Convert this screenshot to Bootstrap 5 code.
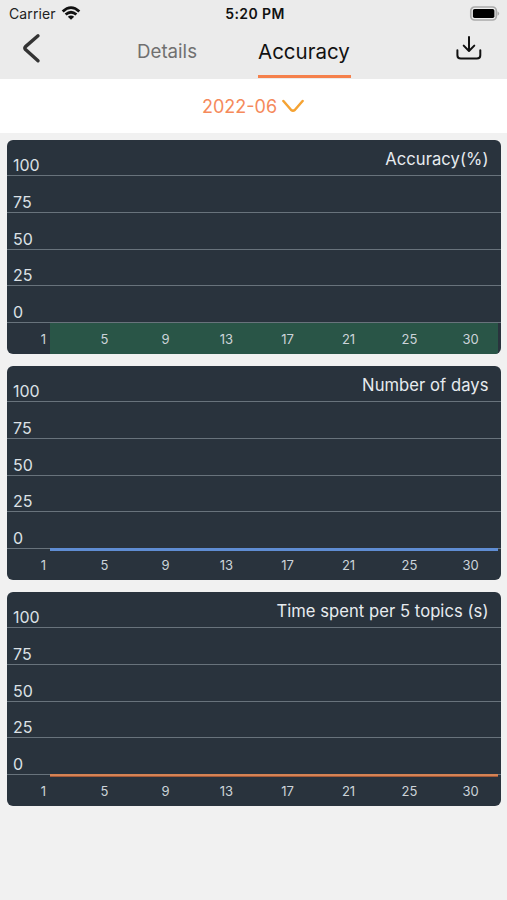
<!DOCTYPE html>
<html lang="en">
<head>
<meta charset="utf-8">
<meta name="viewport" content="width=device-width, initial-scale=1">
<title>Accuracy</title>
<link href="https://cdn.jsdelivr.net/npm/bootstrap@5.3.0/dist/css/bootstrap.min.css" rel="stylesheet">
<style>
body{background:#f1f1f1;font-family:Inter,"Liberation Sans",sans-serif;color:#111;min-height:900px}
svg{display:block}
.top-area{background:#ebebeb;height:79px}
.status-bar{height:27px;padding:0 6px 0 9px;font-size:14px;line-height:27px}
.status-bar>*{flex:1 1 0}
.carrier{letter-spacing:.1px;color:#222}
.clock{font-weight:600;letter-spacing:.4px}
.title-bar{height:52px;padding:0 25px 0 21px}
.tab-link{line-height:30px;padding-top:9px;height:51px;border-bottom:3px solid transparent;white-space:nowrap}
.tab-details{font-size:18.7px;line-height:32px;color:#707070;margin-left:96px;width:61px}
.tab-accuracy{font-size:20.5px;line-height:31px;color:#111;margin-left:60px;width:93px;border-color:#f5804b}
.month-bar{height:54px;font-size:18px;color:#f58a5b;gap:5px;padding-right:1px}
.charts{padding:7px 6px 0 7px;gap:12.4px}
.chart-card{background:#29333d;border-radius:6px;height:213.6px;color:#dce1e6;overflow:hidden}
.level{height:36.7px;border-bottom:1px solid #68737c;padding:0 12.5px 0 6px;font-size:16px;line-height:20px}
.level:first-child{height:36.2px}
.chart-title{height:35px;line-height:39px;font-size:16.6px;letter-spacing:.05px;color:#e7ebef;white-space:nowrap}
.days{padding-left:6px;font-size:13px;line-height:32px;height:31px;color:#ccd3d9;position:relative}
.days>span{width:61px;text-align:center;z-index:1}
.series{position:absolute;left:43px;right:3px;top:-1px;height:3px}
.series-accuracy{top:0;height:31px;background:#295547}
.series-days{background:#5f8dd3}
.series-time{background:#d58354;border-bottom:1px solid #a1593a}
</style>
</head>
<body>
<header class="top-area">
  <div class="status-bar d-flex align-items-center">
    <div class="d-flex align-items-center">
      <span class="carrier">Carrier</span>
      <svg class="ms-1" width="22" height="16" viewBox="0 0 22 16" fill="none" stroke="#111" stroke-width="2.8"><path d="M2.7 5.5Q11 -2.3 19.3 5.5M5.6 8.5Q11 3.9 16.4 8.5"/><path d="M7.8 10.7Q11 8.2 14.2 10.7L11 13.7Z" fill="#111" stroke="none"/></svg>
    </div>
    <div class="clock text-center">5:20 PM</div>
    <div class="d-flex justify-content-end">
      <svg width="32" height="16" viewBox="0 0 32 16"><rect x="1.8" y="1" width="25.5" height="13" rx="3.8" fill="#eee" stroke="#aaa" stroke-width="1.7"/><rect x="3.9" y="3" width="21.5" height="9" rx="1.7" fill="#000"/><path d="M28.5 5.2Q32 7.5 28.5 9.8Z" fill="#aaa"/></svg>
    </div>
  </div>
  <nav class="title-bar d-flex align-items-start">
    <svg width="20" height="44" viewBox="0 0 20 44" fill="none" stroke="#333" stroke-width="3.4" stroke-linecap="round" stroke-linejoin="round"><path d="M17 8.8L4.5 19.6Q3.2 21 4.5 22.6L17 33.8"/></svg>
    <a class="tab-link tab-details text-decoration-none" href="#">Details</a>
    <a class="tab-link tab-accuracy text-decoration-none" href="#">Accuracy</a>
    <svg class="ms-auto" width="28" height="44" viewBox="0 0 28 44" fill="none" stroke="#111" stroke-width="2" stroke-linecap="round" stroke-linejoin="round"><path d="M15 10V23.5M9.7 18.6L15 24L20.3 18.6M3.4 23.3V28.2Q3.4 31.6 6.8 31.6H22.9Q26.3 31.6 26.3 28.2V23.3"/></svg>
  </nav>
</header>
<div class="month-bar bg-white d-flex align-items-center justify-content-center">
  <span>2022-06</span>
  <svg width="22" height="14" viewBox="0 0 22 14" fill="none" stroke="#f5a333" stroke-width="2.5" stroke-linecap="round" stroke-linejoin="round"><path d="M1.4 2L9.2 11Q11 12.5 12.8 11L20.6 2"/></svg>
</div>
<main class="charts d-flex flex-column">
  <section class="chart-card">
    <div class="level d-flex justify-content-between align-items-end"><span>100</span><span class="chart-title">Accuracy(%)</span></div>
    <div class="level d-flex align-items-end">75</div>
    <div class="level d-flex align-items-end">50</div>
    <div class="level d-flex align-items-end">25</div>
    <div class="level d-flex align-items-end">0</div>
    <div class="days d-flex"><div class="series series-accuracy"></div><span>1</span><span>5</span><span>9</span><span>13</span><span>17</span><span>21</span><span>25</span><span>30</span></div>
  </section>
  <section class="chart-card">
    <div class="level d-flex justify-content-between align-items-end"><span>100</span><span class="chart-title">Number of days</span></div>
    <div class="level d-flex align-items-end">75</div>
    <div class="level d-flex align-items-end">50</div>
    <div class="level d-flex align-items-end">25</div>
    <div class="level d-flex align-items-end">0</div>
    <div class="days d-flex"><div class="series series-days"></div><span>1</span><span>5</span><span>9</span><span>13</span><span>17</span><span>21</span><span>25</span><span>30</span></div>
  </section>
  <section class="chart-card">
    <div class="level d-flex justify-content-between align-items-end"><span>100</span><span class="chart-title">Time spent per 5 topics (s)</span></div>
    <div class="level d-flex align-items-end">75</div>
    <div class="level d-flex align-items-end">50</div>
    <div class="level d-flex align-items-end">25</div>
    <div class="level d-flex align-items-end">0</div>
    <div class="days d-flex"><div class="series series-time"></div><span>1</span><span>5</span><span>9</span><span>13</span><span>17</span><span>21</span><span>25</span><span>30</span></div>
  </section>
</main>
<script src="https://cdn.jsdelivr.net/npm/bootstrap@5.3.0/dist/js/bootstrap.bundle.min.js"></script>
</body>
</html>
